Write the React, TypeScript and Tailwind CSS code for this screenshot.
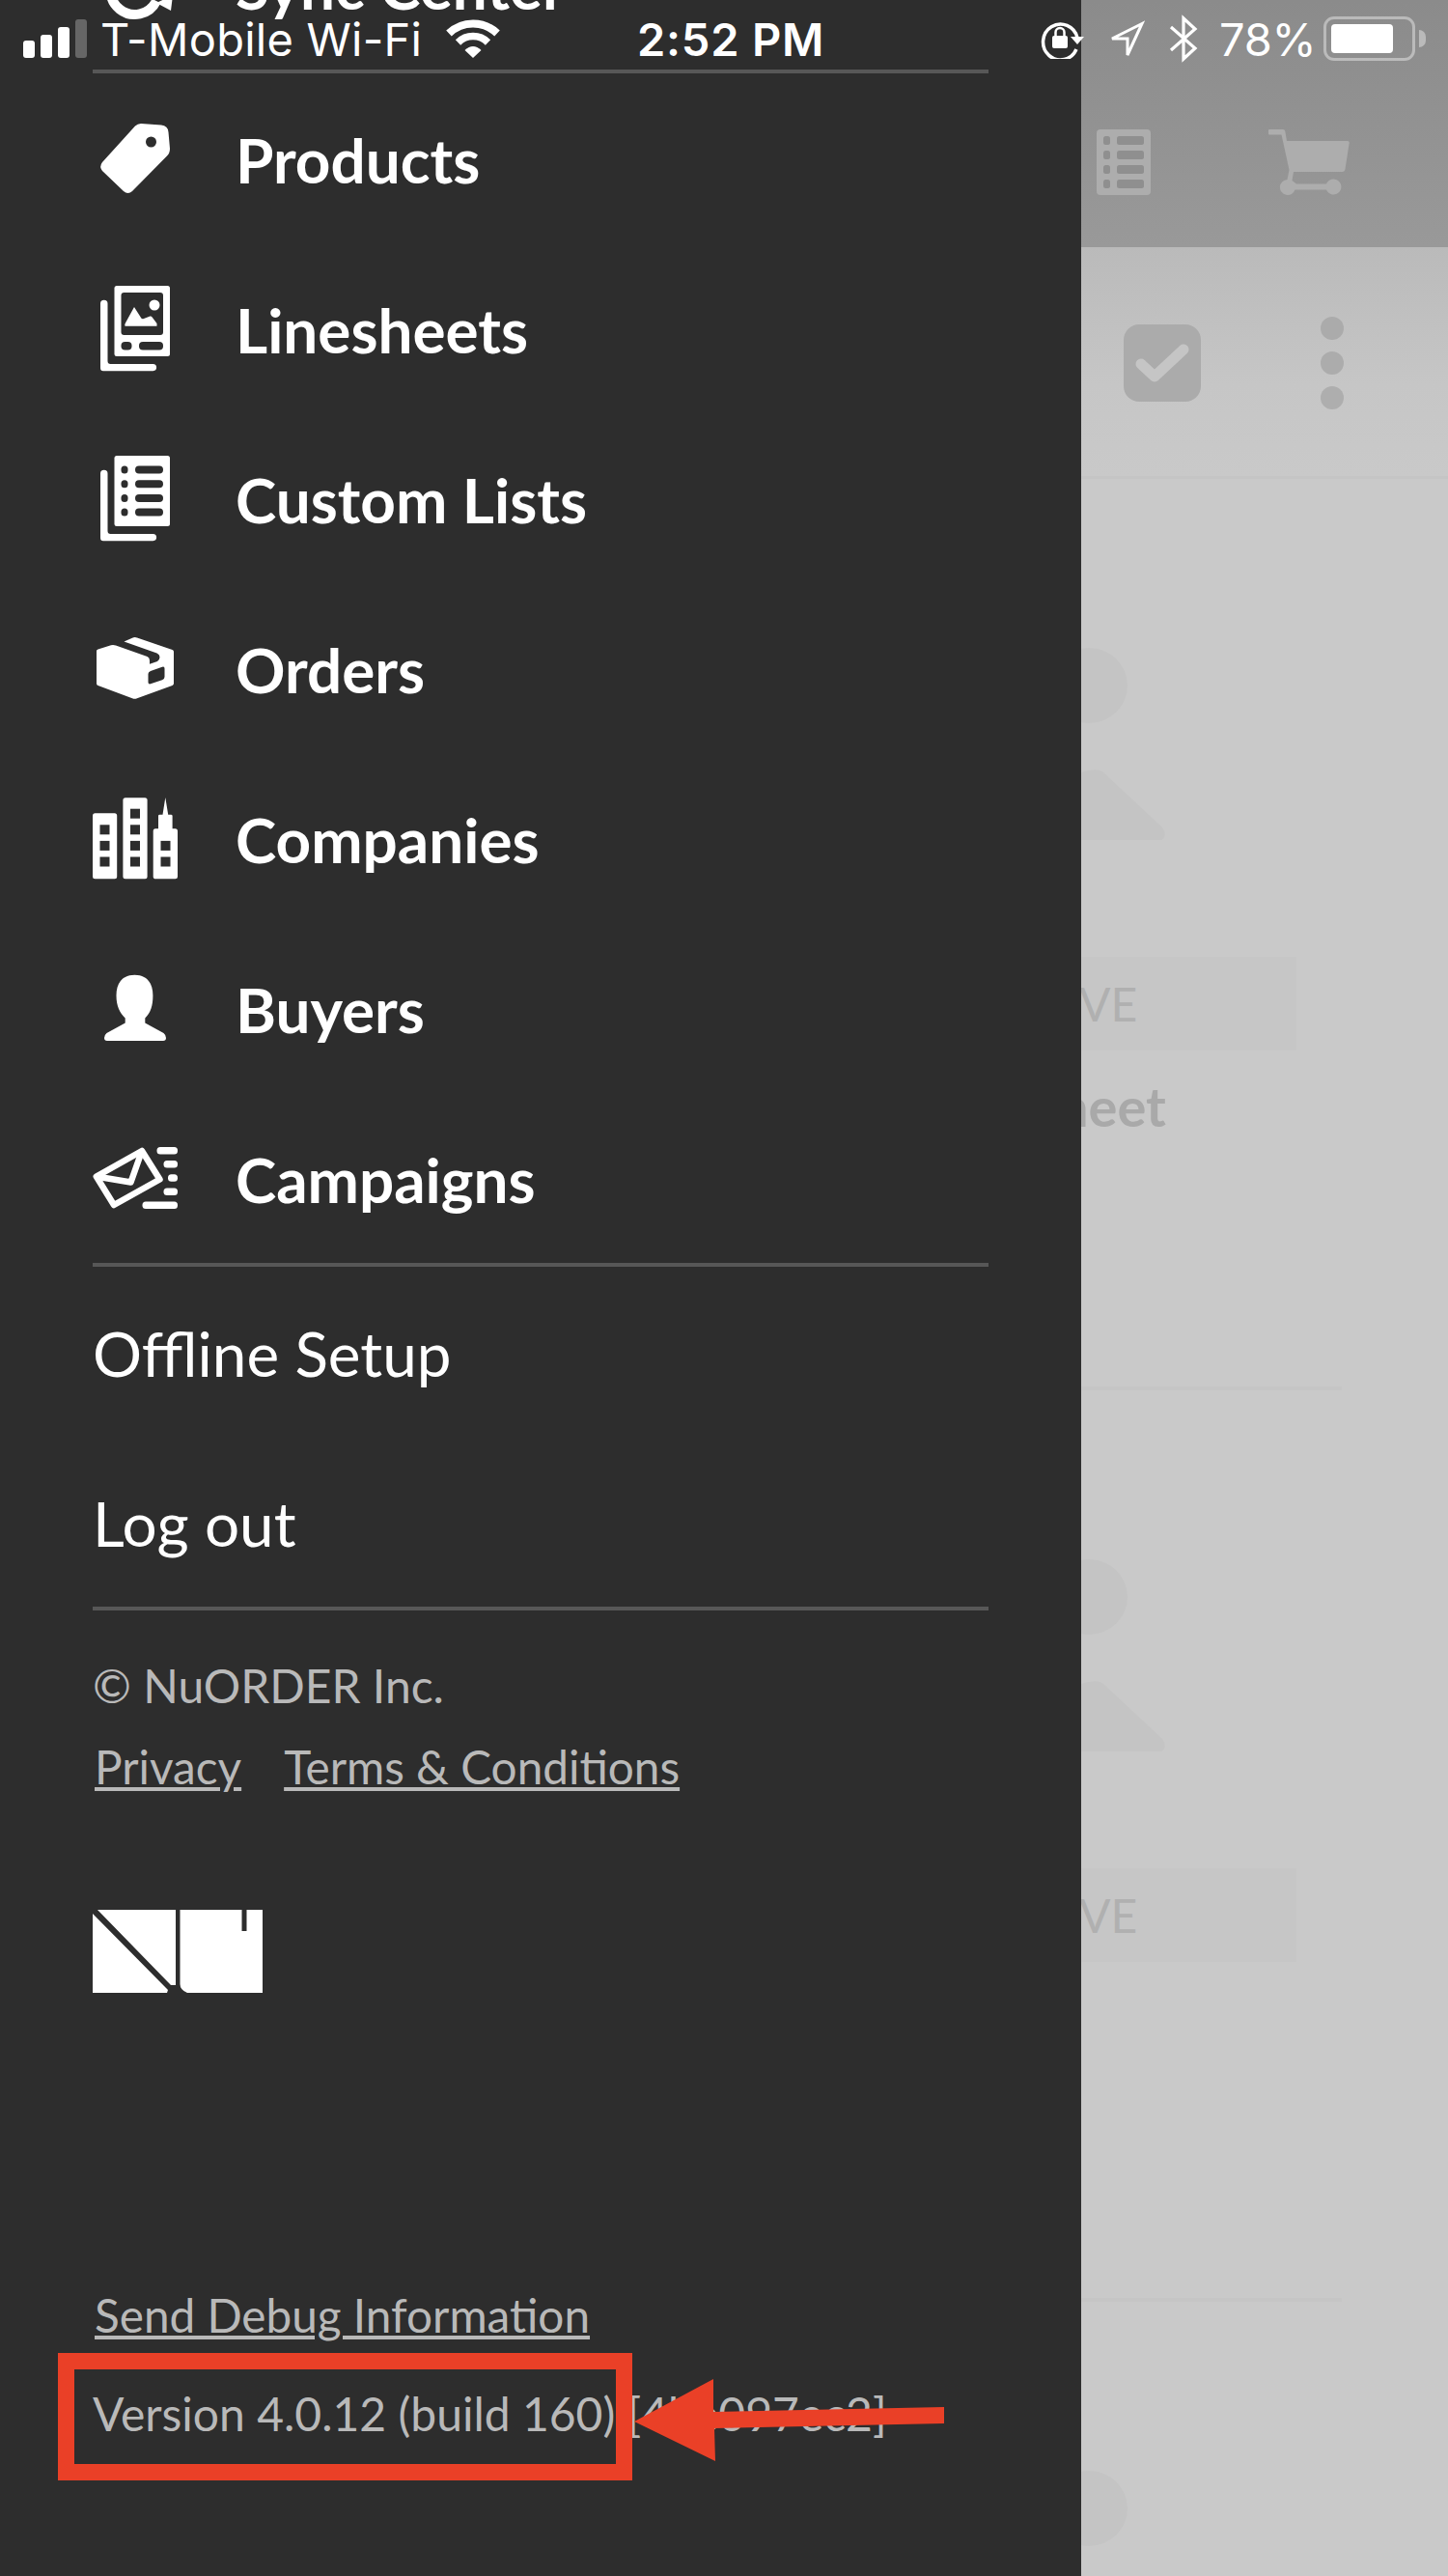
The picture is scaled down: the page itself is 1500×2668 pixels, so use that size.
import type { ReactNode } from "react";

type IconProps = {
  children: ReactNode;
};

const MenuIcon = ({ children }: IconProps) => (
  <svg viewBox="0 0 88 96" className="w-[88px] h-24 shrink-0 fill-white">
    {children}
  </svg>
);

const SyncIcon = () => (
  <MenuIcon>
    <path d="M66 65A25 25 0 1 1 66 43" fill="none" stroke="#fff" strokeWidth="10" />
    <path d="M66 67l15 8 2-16z" />
  </MenuIcon>
);

const TagIcon = () => (
  <MenuIcon>
    <path
      fillRule="evenodd"
      d="M44 14.500Q46.500 12 50 12L71 13.500Q78 14 78.500 21L80 38Q80 42.500 77 45.500L41 82Q36.500 86 32 82L10 61Q6.500 56.500 10 52ZM60.500 25.500a5.500 5.500 0 1 0 0 11 5.500 5.500 0 0 0 0-11Z"
    />
  </MenuIcon>
);

const Sheet = () => (
  <>
    <path d="M8 22.500a3.700 3.700 0 0 1 7.500 0V82Q15.500 85 18.500 85H62.500a3.600 3.600 0 0 1 0 7.200H11Q8 92.200 8 89Z" />
    <rect x="22.500" y="4" width="57.500" height="73" rx="2.500" />
  </>
);

const LinesheetIcon = () => (
  <MenuIcon>
    <Sheet />
    <g className="fill-[#2d2d2d]">
      <rect x="29.500" y="11" width="43.500" height="44" rx="3" />
      <rect x="29.500" y="62" width="11" height="8.500" rx="4" />
      <rect x="48" y="62" width="25" height="8.500" rx="4" />
    </g>
    <path d="M33.500 45.700Q33 43.500 34.500 41.500L43 26L50 37Q51 39 53 38L59.500 35.500Q61 35 62 37L66.500 43V45.700Z" />
    <circle cx="64" cy="24" r="5.500" />
  </MenuIcon>
);

const ListIcon = () => (
  <MenuIcon>
    <Sheet />
    {[14.5, 29.2, 43.9, 58.6].map((y) => (
      <g key={y} className="fill-[#2d2d2d]">
        <rect x="29.500" y={y} width="7" height="8" rx="3.500" />
        <rect x="44" y={y} width="29" height="8" rx="4" />
      </g>
    ))}
  </MenuIcon>
);

const BoxIcon = () => (
  <MenuIcon>
    <path
      fillRule="evenodd"
      d="M4 30Q4 29 5.500 28.500L19 24.200Q21.400 23.500 24 24.500L56.500 36Q59 37 59 40V43.700L67 41Q69.500 39.500 69.500 36.500 69.500 34 66.500 32.500L32.500 20.500L41 16.700Q43.600 15.500 46 16.500L82.500 29Q84 29.500 84 31V64Q84 65.200 82.500 66L46 79.200Q43.600 80.300 41 79.200L5.500 66Q4 65.500 4 64ZM60 51Q57.500 52 57.500 54V62.500Q57.500 65 60 64.300L72 60.300Q74.500 59.300 74.500 57V48.500Q74.500 46 72 46.800Z"
    />
  </MenuIcon>
);

const BuildingsIcon = () => (
  <MenuIcon>
    <rect x="0" y="22.300" width="25.200" height="68" rx="2.500" />
    <rect x="31.400" y="6.300" width="25.200" height="84" rx="2.500" />
    <path d="M65 38.300H68V25Q68 23.700 69.500 23.700H72.500L75.300 6L78.200 23.700H81Q82.600 23.700 82.600 25V38.300H85.500Q88 38.300 88 41V88Q88 90.300 85.500 90.300H65.500Q62.700 90.300 62.700 88V41Q62.700 38.300 65 38.300Z" />
    <g className="fill-[#2d2d2d]">
      {[34.3, 50.9, 67.5].map((y) => (
        <rect key={y} x="7.500" y={y} width="10" height="10" />
      ))}
      {[17.7, 34.3, 50.9, 67.5].map((y) => (
        <rect key={y} x="39" y={y} width="10" height="10" />
      ))}
      {[50.9, 67.5].map((y) => (
        <rect key={y} x="70.500" y={y} width="10" height="10" />
      ))}
    </g>
  </MenuIcon>
);

const BuyerIcon = () => (
  <MenuIcon>
    <path d="M43.500 13.700C56 13.700 62.400 22 62.400 35C62.400 46 60 53 54.300 58.500V63.500L73.500 74Q76 76 76 79Q76 82 73 82H15Q12 82 12 79Q12 76 14.500 74L33.700 63.500V58.500C28 53 24.500 46 24.500 35C24.500 22 31 13.700 43.500 13.700Z" />
  </MenuIcon>
);

const CampaignIcon = () => (
  <MenuIcon>
    <g fill="none" stroke="#fff" strokeWidth="6.500" strokeLinejoin="round">
      <path d="M51 20L3.800 46.500L22 76L69.500 49.500Z" />
      <path d="M3.800 46.500L39.500 52.500L51 20" />
    </g>
    <rect x="66.500" y="16" width="21.500" height="7.500" rx="3.500" />
    <rect x="73.500" y="30" width="14.500" height="7.500" rx="3.500" />
    <rect x="78" y="44.300" width="10" height="7.500" rx="3.500" />
    <rect x="73.500" y="58.500" width="14.500" height="7.500" rx="3.500" />
    <rect x="51.500" y="72.500" width="36.500" height="7.500" rx="3.500" />
  </MenuIcon>
);

const menu = [
  { label: "Products", icon: <TagIcon /> },
  { label: "Linesheets", icon: <LinesheetIcon /> },
  { label: "Custom Lists", icon: <ListIcon /> },
  { label: "Orders", icon: <BoxIcon /> },
  { label: "Companies", icon: <BuildingsIcon /> },
  { label: "Buyers", icon: <BuyerIcon /> },
  { label: "Campaigns", icon: <CampaignIcon /> },
];

type MenuItemProps = {
  label: string;
  icon: ReactNode;
};

const MenuItem = ({ label, icon }: MenuItemProps) => (
  <li className="flex h-44 items-center gap-[60px] text-[63.8px] font-bold leading-none whitespace-nowrap">
    {icon}
    <span className="pt-1">{label}</span>
  </li>
);

const Divider = () => <div className="h-1 w-[928px] shrink-0 bg-[#575757]" />;

const linkClass = "text-[47.7px] underline decoration-4 underline-offset-[3px]";

const Sidebar = () => (
  <aside className="flex h-full w-[1120px] shrink-0 flex-col bg-[#2d2d2d] pl-24 text-white">
    <ul className="-mt-[104px]">
      <MenuItem label="Sync Center" icon={<SyncIcon />} />
    </ul>
    <Divider />
    <ul>
      {menu.map((item) => (
        <MenuItem key={item.label} {...item} />
      ))}
    </ul>
    <Divider />
    <ul className="h-[352px] pt-0.5 text-[63.8px] leading-[176px]">
      <li>Offline Setup</li>
      <li>Log out</li>
    </ul>
    <Divider />
    <div className="mt-9 text-[48px] leading-[84px] text-[#b9b9b9]">
      <p>© NuORDER Inc.</p>
      <p className="flex gap-11 pl-0.5">
        <a className={linkClass}>Privacy</a>
        <a className={linkClass}>Terms &amp; Conditions</a>
      </p>
    </div>
    <svg viewBox="0 0 176 86" className="mt-[106px] h-[86px] w-44 fill-white">
      <path d="M5 0H86V78H81ZM0 4L78 83L77 86H0Z" />
      <path d="M90.500 0H154.500V22H159.500V0H176V86H98Q90.500 83 90.500 77Z" />
    </svg>
    <div className="mt-[283px] text-[48px] leading-[102px] whitespace-nowrap text-[#b9b9b9]">
      <p className="h-[102px] pl-0.5">
        <a className={linkClass}>Send Debug Information</a>
      </p>
      <p>Version 4.0.12 (build 160) [4be097ec2]</p>
    </div>
  </aside>
);

type CardProps = {
  title?: string;
};

const Card = ({ title }: CardProps) => (
  <div className="mr-[110px] h-[944px] shrink-0 overflow-hidden border-b-4 border-[#c5c5c5] pt-[174px]">
    <svg viewBox="0 0 90 202" className="h-[202px] w-[90px] fill-[#c4c4c4]">
      <ellipse cx="8" cy="40" rx="40" ry="39" />
      <path d="M0 130Q18 124 24 131L84 187Q90 196 83 200H0Z" />
    </svg>
    <div className="mt-[119px] h-[97px] w-[223px] bg-[#c6c6c6] text-[48px] leading-[97px] text-[#b0b0b0]">
      <span className="-ml-0.5">VE</span>
    </div>
    <div className="-ml-6 mt-[25px] text-[56px] font-bold leading-[66px] text-[#a9a9a9]">{title}</div>
  </div>
);

const Content = () => (
  <main className="flex h-full w-[380px] flex-col overflow-hidden bg-[#c9c9c9]">
    <header className="flex h-64 shrink-0 items-start bg-linear-to-b from-[#8b8b8b] to-[#999999] pl-4 pt-[134px]">
      <svg viewBox="0 0 56 68" className="h-[68px] w-14">
        <rect width="56" height="68" rx="4" fill="#adadad" />
        {[7, 22, 37, 52].map((y) => (
          <g key={y} fill="#8f8f8f">
            <rect x="7" y={y} width="7" height="9" rx="2.500" />
            <rect x="21" y={y} width="28" height="9" rx="2.500" />
          </g>
        ))}
      </svg>
      <svg viewBox="0 0 84 68" className="ml-[122px] h-[68px] w-[84px] fill-[#adadad]">
        <path d="M1 0H15Q17 0 17.300 2L19 12H82Q84 12 83.700 14L79.500 41Q79 44 76.500 44H26L24.500 53L29 56.500H60A8 8 0 1 1 60 62.500H27.500A8 8 0 1 1 19.500 52L21.500 42L13.500 5.500H1Q0 5.500 0 4V1Q0 0 1 0Z" />
      </svg>
    </header>
    <div className="flex h-60 shrink-0 items-center border-b-[3px] border-[#c5c5c5] bg-linear-to-b from-[#bababa] via-[#c6c6c6] via-60% to-[#c9c9c9] pl-11 pt-[3px]">
      <svg viewBox="0 0 80 80" className="size-20">
        <rect width="80" height="80" rx="16" fill="#ababab" />
        <path
          d="M18 41L32 54L62 26"
          fill="none"
          stroke="#c5c5c5"
          strokeWidth="11"
          strokeLinecap="round"
          strokeLinejoin="round"
        />
      </svg>
      <div className="ml-[124px] flex flex-col gap-3">
        <span className="size-6 rounded-full bg-[#ababab]" />
        <span className="size-6 rounded-full bg-[#acacac]" />
        <span className="size-6 rounded-full bg-[#aeaeae]" />
      </div>
    </div>
    <Card title="heet" />
    <Card />
    <Card />
  </main>
);

const StatusBar = () => (
  <div className="absolute inset-x-0 top-0 flex h-20 items-center pl-6 font-['Inter',sans-serif] text-[47px] leading-none whitespace-nowrap text-white">
    <div className="flex h-10 items-end gap-1.5">
      <span className="h-[18px] w-3 rounded-[3px] bg-white" />
      <span className="h-6 w-3 rounded-[3px] bg-white" />
      <span className="h-8 w-3 rounded-[3px] bg-white" />
      <span className="h-10 w-3 rounded-[3px] bg-[#666666]" />
    </div>
    <span className="ml-[14px] w-[357px] tracking-[0.25px]">T-Mobile Wi-Fi</span>
    <svg viewBox="0 0 58 40" className="h-10 w-[58px]">
      <path d="M4 14.500A36 36 0 0 1 54 14.500" fill="none" stroke="#fff" strokeWidth="8" />
      <path d="M13.500 24A22 22 0 0 1 44.500 24" fill="none" stroke="#fff" strokeWidth="7.500" />
      <path d="M20.500 32Q29 24 37.500 32L29 40Z" fill="#fff" />
    </svg>
    <span className="ml-[141px] w-[418px] font-semibold tracking-[0.8px]">2:52 PM</span>
    <svg viewBox="0 0 46 42" className="h-[42px] w-[46px]">
      <path d="M37 32A18 18.500 0 1 1 38 20" fill="none" stroke="#fff" strokeWidth="3.500" />
      <path d="M31 19H45L38 27Z" fill="#fff" />
      <rect x="12" y="18" width="16" height="13" rx="2" fill="#fff" />
      <path d="M15.500 19V14.500a4.500 4.500 0 0 1 9 0V19" fill="none" stroke="#fff" strokeWidth="2.500" />
    </svg>
    <svg viewBox="0 0 40 42" className="ml-[23px] mt-1 h-[42px] w-10">
      <path d="M36 3.500L5 19H21V36Z" fill="none" stroke="#fff" strokeWidth="3" />
    </svg>
    <svg viewBox="0 0 30 50" className="ml-6 h-[50px] w-[30px]">
      <path d="M2 13L27 35L15 46V4L27 15L2 37" fill="none" stroke="#fff" strokeWidth="3.200" />
    </svg>
    <span className="ml-[22px] w-[108px] tracking-[-0.3px]">78%</span>
    <div className="h-[46px] w-[95px] rounded-[11px] border-[3px] border-white/40 p-[5px]">
      <div className="h-full w-16 rounded-[4px] bg-white" />
    </div>
    <span className="ml-1 h-[18px] w-[7px] rounded-r-full bg-white/40" />
  </div>
);

const Highlight = () => (
  <>
    <div className="absolute left-[60px] top-[2437px] h-[132px] w-[595px] border-[17px] border-[#ea4027]" />
    <svg viewBox="0 0 322 88" className="absolute left-[657px] top-[2463px] h-[88px] w-[322px] fill-[#ea4027]">
      <path d="M0 45L82 1V35L321 30V47L83 52L84 86Z" />
    </svg>
  </>
);

export default function App() {
  return (
    <div className="relative flex h-[2668px] w-[1500px] overflow-hidden font-['Lato',sans-serif]">
      <Sidebar />
      <Content />
      <StatusBar />
      <Highlight />
    </div>
  );
}
